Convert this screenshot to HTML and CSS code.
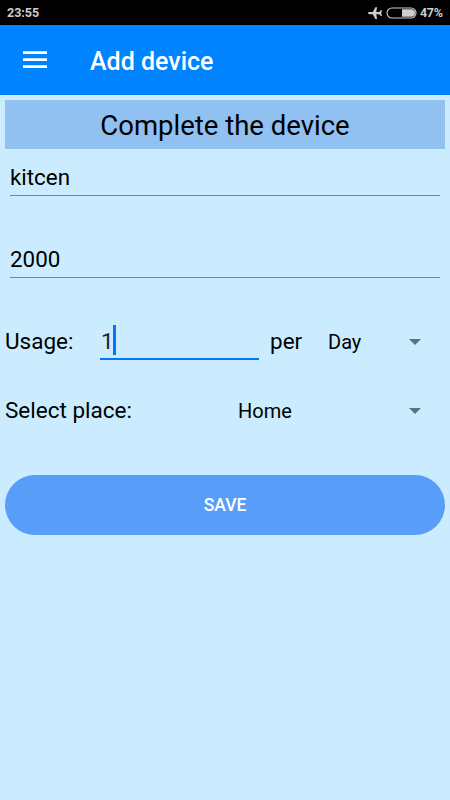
FILE: index.html
```html
<!DOCTYPE html>
<html lang="en">
<head>
<meta charset="utf-8">
<title>Add device</title>
<link rel="stylesheet" href="styles.css">
</head>
<body>
<div class="status">
  <span class="clock">23:55</span>
  <svg class="plane" width="16" height="14" viewBox="0 0 16 14"><path d="M1 7.1Q1 6 2.2 6H5.8L8.4 1.2H10.1L9.2 6H12.2L13.8 4.2H15L14.2 7.1L15 10H13.8L12.2 8.2H9.2L10.1 13H8.4L5.8 8.2H2.2Q1 8.2 1 7.1Z"/></svg>
  <svg class="battery" width="31" height="12" viewBox="0 0 31 12"><rect class="shell" x="1" y="1" width="29" height="10" rx="5"/><path d="M16 2.2H25.2A3.8 3.8 0 0 1 25.2 9.8H16Z"/></svg>
  <span class="percent">47%</span>
</div>
<header class="bar">
  <svg class="menu" width="24" height="17" viewBox="0 0 24 17"><path d="M0 .2H24V2.9H0ZM0 7.2H24V9.9H0ZM0 14.2H24V16.9H0Z"/></svg>
  <h1 class="title">Add device</h1>
</header>
<main class="form">
  <h2 class="heading">Complete the device</h2>
  <div class="field name">kitcen</div>
  <div class="field power">2000</div>
  <div class="row usage">
    <span class="label">Usage:</span>
    <div class="amount">1<i class="caret"></i></div>
    <span class="per">per</span>
    <div class="spinner day">Day<i class="arrow"></i></div>
  </div>
  <div class="row place">
    <span class="label">Select place:</span>
    <div class="spinner home">Home<i class="arrow"></i></div>
  </div>
  <button class="save">SAVE</button>
</main>
</body>
</html>
```
FILE: styles.css
```css
* { box-sizing: border-box; }
body {
  margin: 0;
  height: 800px;
  overflow: hidden;
  background: #cbecfe;
  color: #000;
  font-family: Roboto, "Liberation Sans", sans-serif;
}
.status {
  display: flex;
  align-items: center;
  height: 25px;
  padding: 0 8px 0 7px;
  background: #000;
  color: #cecece;
  fill: #cecece;
  font-size: 12.5px;
  font-weight: 700;
}
.plane { margin-left: auto; margin-right: 3px; }
.battery { margin-right: 3px; }
.percent { width: 22px; letter-spacing: -0.3px; }
.shell { fill: none; stroke: #cecece; stroke-width: 1.1; }
.bar {
  display: flex;
  align-items: center;
  height: 70px;
  padding: 0 23px;
  background: #0083ff;
  border-bottom: 1px solid #0079f6;
  color: #fff;
}
.menu { fill: #fff; margin-right: 43px; }
.title { margin: 3px 0 0; font-size: 25px; font-weight: 500; }
.form { padding: 5px; }
.heading {
  margin: 0;
  height: 49px;
  line-height: 52px;
  background: #90c1f1;
  font-size: 27.5px;
  font-weight: 400;
  text-align: center;
}
.field {
  height: 47px;
  margin: 0 5px;
  line-height: 57px;
  border-bottom: 1.5px solid #738790;
  font-size: 22.4px;
}
.power { margin-top: 35px; }
.row { display: flex; font-size: 22.5px; }
.usage { margin-top: 46px; height: 36px; line-height: 35px; }
.label { flex: none; }
.usage .label { width: 95px; }
.amount {
  display: flex;
  flex: none;
  width: 159px;
  padding-left: 1px;
  border-bottom: 2px solid #0078f7;
  color: #222;
}
.caret {
  width: 3px;
  height: 30px;
  margin: 1px 0 0 -1px;
  background: #0078f7;
}
.per { flex: none; width: 69px; padding-left: 11px; }
.spinner {
  display: flex;
  flex: 1;
  align-items: center;
  justify-content: space-between;
  padding-right: 24px;
  font-size: 20px;
}
.arrow {
  border: 6px solid transparent;
  border-top-color: #5e6f78;
  border-bottom: 0;
}
.place { margin-top: 33px; height: 36px; line-height: 35px; }
.place .label { width: 233px; }
.save {
  display: block;
  width: 100%;
  height: 60px;
  margin-top: 45.5px;
  padding: 1px 0 0;
  border: 0;
  border-radius: 30px;
  background: #589df8;
  color: #fff;
  font: 500 17.5px Roboto, "Liberation Sans", sans-serif;
}
```
